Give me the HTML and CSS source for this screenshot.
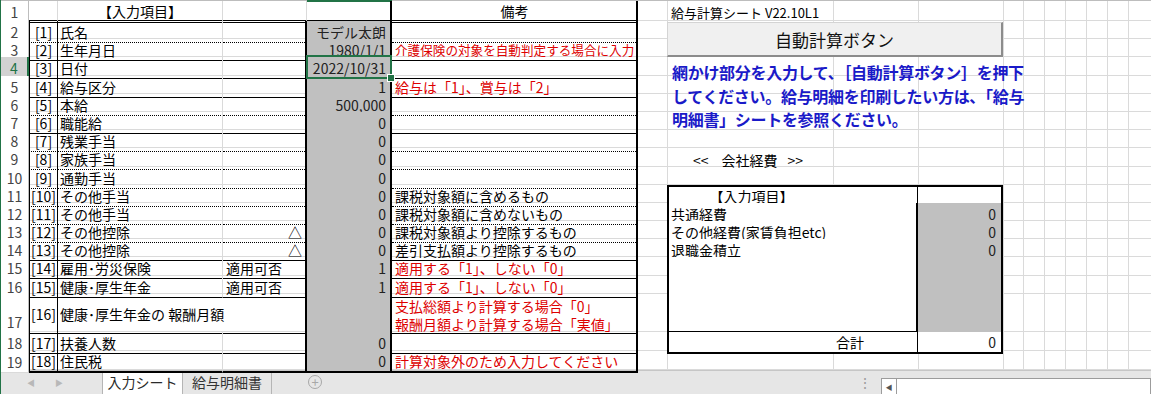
FILE: index.html
```html
<!DOCTYPE html>
<html lang="ja">
<head>
    <meta charset="UTF-8">
    <title>給与計算シート</title>
    <link rel="stylesheet" href="styles.css">
</head>
<body>

<div class="window">
    <div class="sheet">

        <div class="row r1">
            <div class="rh">1</div>
            <div class="cell t no"></div>
            <div class="cell t item center">【入力項目】</div>
            <div class="cell t sub"></div>
            <div class="cell t val"></div>
            <div class="cell t note center">備考</div>
            <div class="cell version">給与計算シート V22.10L1</div>
        </div>

        <div class="row dot">
            <div class="rh">2</div>
            <div class="cell t no">[1]</div>
            <div class="cell t item">氏名</div>
            <div class="cell t sub"></div>
            <div class="cell t val">モデル太朗</div>
            <div class="cell t note"></div>
        </div>

        <div class="row">
            <div class="rh">3</div>
            <div class="cell t no">[2]</div>
            <div class="cell t item">生年月日</div>
            <div class="cell t sub"></div>
            <div class="cell t val">1980/1/1</div>
            <div class="cell t note red shrink">介護保険の対象を自動判定する場合に入力</div>
        </div>

        <div class="row">
            <div class="rh active">4</div>
            <div class="cell t no">[3]</div>
            <div class="cell t item">日付</div>
            <div class="cell t sub"></div>
            <div class="cell t val selected">2022/10/31</div>
            <div class="cell t note"></div>
        </div>

        <div class="row">
            <div class="rh">5</div>
            <div class="cell t no">[4]</div>
            <div class="cell t item">給与区分</div>
            <div class="cell t sub"></div>
            <div class="cell t val">1</div>
            <div class="cell t note red">給与は「1」、賞与は「2」</div>
        </div>

        <div class="row dot">
            <div class="rh">6</div>
            <div class="cell t no">[5]</div>
            <div class="cell t item">本給</div>
            <div class="cell t sub"></div>
            <div class="cell t val">500,000</div>
            <div class="cell t note"></div>
        </div>

        <div class="row">
            <div class="rh">7</div>
            <div class="cell t no">[6]</div>
            <div class="cell t item">職能給</div>
            <div class="cell t sub"></div>
            <div class="cell t val">0</div>
            <div class="cell t note"></div>
        </div>

        <div class="row dot">
            <div class="rh">8</div>
            <div class="cell t no">[7]</div>
            <div class="cell t item">残業手当</div>
            <div class="cell t sub"></div>
            <div class="cell t val">0</div>
            <div class="cell t note"></div>
        </div>

        <div class="row dot">
            <div class="rh">9</div>
            <div class="cell t no">[8]</div>
            <div class="cell t item">家族手当</div>
            <div class="cell t sub"></div>
            <div class="cell t val">0</div>
            <div class="cell t note"></div>
            <div class="cell caption"><span>&lt;&lt;</span><span class="caption-text">会社経費</span><span>&gt;&gt;</span></div>
        </div>

        <div class="row dot">
            <div class="rh">10</div>
            <div class="cell t no">[9]</div>
            <div class="cell t item">通勤手当</div>
            <div class="cell t sub"></div>
            <div class="cell t val">0</div>
            <div class="cell t note"></div>
        </div>

        <!-- 会社経費の表は 11〜18 行目 -->
        <div class="row dot">
            <div class="rh">11</div>
            <div class="cell t no">[10]</div>
            <div class="cell t item">その他手当</div>
            <div class="cell t sub"></div>
            <div class="cell t val">0</div>
            <div class="cell t note">課税対象額に含めるもの</div>
            <div class="cell ct ct-head">【入力項目】</div>
            <div class="cell cv cv-head"></div>
        </div>

        <div class="row dot">
            <div class="rh">12</div>
            <div class="cell t no">[11]</div>
            <div class="cell t item">その他手当</div>
            <div class="cell t sub"></div>
            <div class="cell t val">0</div>
            <div class="cell t note">課税対象額に含めないもの</div>
            <div class="cell ct">共通経費</div>
            <div class="cell cv">0</div>
        </div>

        <div class="row dot">
            <div class="rh">13</div>
            <div class="cell t no">[12]</div>
            <div class="cell t item">その他控除</div>
            <div class="cell t sub right">△</div>
            <div class="cell t val">0</div>
            <div class="cell t note">課税対象額より控除するもの</div>
            <div class="cell ct">その他経費(家賃負担etc)</div>
            <div class="cell cv">0</div>
        </div>

        <div class="row">
            <div class="rh">14</div>
            <div class="cell t no">[13]</div>
            <div class="cell t item">その他控除</div>
            <div class="cell t sub right">△</div>
            <div class="cell t val">0</div>
            <div class="cell t note">差引支払額より控除するもの</div>
            <div class="cell ct">退職金積立</div>
            <div class="cell cv">0</div>
        </div>

        <div class="row">
            <div class="rh">15</div>
            <div class="cell t no">[14]</div>
            <div class="cell t item">雇用･労災保険</div>
            <div class="cell t sub">適用可否</div>
            <div class="cell t val">1</div>
            <div class="cell t note red">適用する「1」、しない「0」</div>
            <div class="cell ct"></div>
            <div class="cell cv"></div>
        </div>

        <div class="row">
            <div class="rh">16</div>
            <div class="cell t no">[15]</div>
            <div class="cell t item">健康･厚生年金</div>
            <div class="cell t sub">適用可否</div>
            <div class="cell t val">1</div>
            <div class="cell t note red">適用する「1」、しない「0」</div>
            <div class="cell ct"></div>
            <div class="cell cv"></div>
        </div>

        <div class="row r17">
            <div class="rh">17</div>
            <div class="cell t no">[16]</div>
            <div class="cell t item wide">健康･厚生年金の 報酬月額</div>
            <div class="cell t val"></div>
            <div class="cell t note red two-lines">支払総額より計算する場合「0」<br>報酬月額より計算する場合「実値」</div>
            <div class="cell ct ct-last"></div>
            <div class="cell cv cv-last"></div>
        </div>

        <div class="row r18">
            <div class="rh">18</div>
            <div class="cell t no">[17]</div>
            <div class="cell t item">扶養人数</div>
            <div class="cell t sub"></div>
            <div class="cell t val">0</div>
            <div class="cell t note"></div>
            <div class="cell ct ct-sum">合計</div>
            <div class="cell cv cv-sum">0</div>
        </div>

        <div class="row r19">
            <div class="rh">19</div>
            <div class="cell t no">[18]</div>
            <div class="cell t item">住民税</div>
            <div class="cell t sub"></div>
            <div class="cell t val">0</div>
            <div class="cell t note red">計算対象外のため入力してください</div>
        </div>

        <!-- シート上に置かれたボタンとテキストボックス -->
        <button class="calc-btn" type="button">自動計算ボタン</button>
        <div class="guide">網かけ部分を入力して、［自動計算ボタン］を押下<br>してください。給与明細を印刷したい方は、「給与<br>明細書」シートを参照ください。</div>
    </div>

    <div class="tabbar">
        <div class="tab-nav"><span class="arrow">&#9664;</span><span class="arrow">&#9654;</span></div>
        <div class="tab active">入力シート</div>
        <div class="tab">給与明細書</div>
        <div class="tab-add">+</div>
        <div class="split">&#8942;</div>
        <div class="hscroll"><span class="hscroll-btn">&#9664;</span></div>
    </div>
</div>

</body>
</html>
```

FILE: styles.css
```css
* { box-sizing: border-box; }
body { margin: 0; background: #fff; color: #000; font-family: "Noto Sans CJK JP", "Noto Sans", sans-serif; font-size: 14px; }

.window { width: 1151px; height: 394px; border-left: 1px solid #217346; overflow: hidden; }
.sheet { position: relative; border-top: 1px solid #bdbdbd; }

/* 1行 = 1グリッド。右側の枠線は背景で描く */
.row {
    display: grid;
    grid-template-columns: 28px 29px 165px 84px 85px 246px 29px 166px 85px 85px repeat(6, 21px) 22px;
    height: 18.2px;
    background:
        linear-gradient(#dadada, #dadada) 0 100% / 100% 1px no-repeat,
        linear-gradient(#dadada, #dadada) 666px 0 / 1px 100% no-repeat,
        linear-gradient(#dadada, #dadada) 832px 0 / 1px 100% no-repeat,
        linear-gradient(#dadada, #dadada) 917px 0 / 1px 100% no-repeat,
        linear-gradient(#dadada, #dadada) 1002px 0 / 1px 100% no-repeat,
        linear-gradient(#dadada, #dadada) 1022px 0 / 1px 100% no-repeat,
        linear-gradient(#dadada, #dadada) 1043px 0 / 1px 100% no-repeat,
        linear-gradient(#dadada, #dadada) 1064px 0 / 1px 100% no-repeat,
        linear-gradient(#dadada, #dadada) 1085px 0 / 1px 100% no-repeat,
        linear-gradient(#dadada, #dadada) 1106px 0 / 1px 100% no-repeat,
        linear-gradient(#dadada, #dadada) 1127px 0 / 1px 100% no-repeat;
}
.r1 { height: 20px; }
.r17 { height: 38px; }
.r18, .r19 { height: 19px; }

.rh { display: flex; align-items: center; justify-content: center; padding-top: 1px; background: #fff; color: #444; border-right: 1px solid #bdbdbd; border-bottom: 1px solid #dadada; }
.rh.active { background: #d2d2d2; color: #217346; border-right: 2px solid #217346; }
.r17 .rh { align-items: flex-end; padding-bottom: 1px; }

.cell { display: flex; align-items: center; padding: 1px 2px 0; white-space: nowrap; line-height: 16px; }
.center { justify-content: center; }
.right { justify-content: flex-end; }
.red { color: #dd0000; }

/* 入力項目の表 */
.t { border-bottom: 1px solid #000; }
.dot > .t { border-bottom-style: dotted; }
.r1 > .t { border-bottom: 3px double #000; }
.r19 > .t { border-bottom: 2px solid #000; }

.no { justify-content: center; padding: 1px 0 0; border-left: 1px solid #000; border-right: 1px solid #000; }
.item { border-right: 1px solid #dadada; }
.item.wide { grid-column: span 2; border-right: 2px solid #000; }
.sub { border-right: 2px solid #000; padding-left: 3px; }
.sub.right { padding-right: 3px; }
.val { justify-content: flex-end; padding-right: 4px; background: #c0c0c0; color: #222; border-right: 2px solid #000; }
.note { border-right: 2px solid #000; padding-left: 3px; }
.shrink { font-size: 12.6px; }
.two-lines { line-height: 18px; padding-top: 3px; }

.r1 .no { border-left: 0; border-right-color: #dadada; }
.r1 .sub { border-right: 1px solid #dadada; }
.r1 .val { background: #fff; box-shadow: 0 -1px #217346, inset 0 1px #217346; }

.selected { position: relative; }
.selected::after { content: ""; position: absolute; top: -2px; left: -1px; right: -2px; bottom: -1px; border: 2px solid #217346; z-index: 1; }
.selected::before { content: ""; position: absolute; right: -5px; bottom: -4px; width: 6px; height: 6px; background: #217346; border: 1px solid #fff; z-index: 2; }

/* 右側 */
.version { grid-column: 8 / span 6; font-size: 13px; padding-left: 4px; }
.caption { grid-column: 8 / span 3; padding-left: 26px; }
.caption-text { margin: 0 10px 0 13px; }

.ct { grid-column: 8 / span 2; background: #fff; border-left: 2px solid #000; border-right: 2px solid #000; border-bottom: 1px dotted #000; padding-left: 2px; }
.ct-head { justify-content: center; padding-right: 85px; border-top: 2px solid #000; border-right: 1px solid #000; border-bottom: 3px double #000; }
.ct-last { border-bottom: 3px double #000; }
.ct-sum { padding-left: 167px; border-right: 1px solid #000; border-bottom: 2px solid #000; }

.cv { grid-column: 10; justify-content: flex-end; padding-right: 5px; background: #c0c0c0; color: #222; border-right: 2px solid #000; border-bottom: 1px dotted #000; }
.cv-head { background: #fff; border-top: 2px solid #000; border-bottom: 1px solid #000; }
.cv-last { border-bottom: 2px solid #000; }
.cv-sum { background: #fff; border-bottom: 2px solid #000; }

.calc-btn {
    position: absolute; left: 666px; top: 21px; width: 336px; height: 35px;
    font-family: inherit; font-size: 17px; color: #111;
    background: #f0f0f0; border: 1px solid #d4d4d4; border-right: 2px solid #8c8c8c; border-bottom: 2px solid #8c8c8c;
    padding: 0;
}
.guide { position: absolute; left: 671px; top: 60px; font-size: 16px; font-weight: 700; line-height: 23.5px; letter-spacing: -0.3px; color: #1a1ac8; white-space: nowrap; }

/* シート見出し */
.tabbar { display: flex; height: 24px; background: #e6e6e6; border-top: 1px solid #c6c6c6; }
.tab-nav { width: 101px; display: flex; gap: 16px; padding-left: 24px; align-items: center; }
.arrow { width: 12px; font-size: 8px; color: #b8b8b8; text-align: center; }
.tab { width: 89px; display: flex; align-items: center; justify-content: center; color: #333; border-right: 1px solid #b5b5b5; }
.tab.active { width: 81px; background: #fff; color: #2a2a2a; border-left: 1px solid #b5b5b5; }
.tab-add { width: 14px; height: 14px; margin: 4px 0 0 36px; border: 1px solid #a8a8a8; border-radius: 50%; color: #a8a8a8; font-size: 13px; line-height: 11px; text-align: center; }
.split { margin-left: auto; width: 32px; text-align: center; color: #9c9c9c; font-size: 14px; line-height: 22px; }
.hscroll { width: 270px; margin-top: 7px; background: #fff; border: 1px solid #9c9c9c; border-bottom: 0; }
.hscroll-btn { display: block; width: 15px; height: 100%; border-right: 1px solid #9c9c9c; font-size: 7px; color: #555; text-align: center; line-height: 16px; }
```
